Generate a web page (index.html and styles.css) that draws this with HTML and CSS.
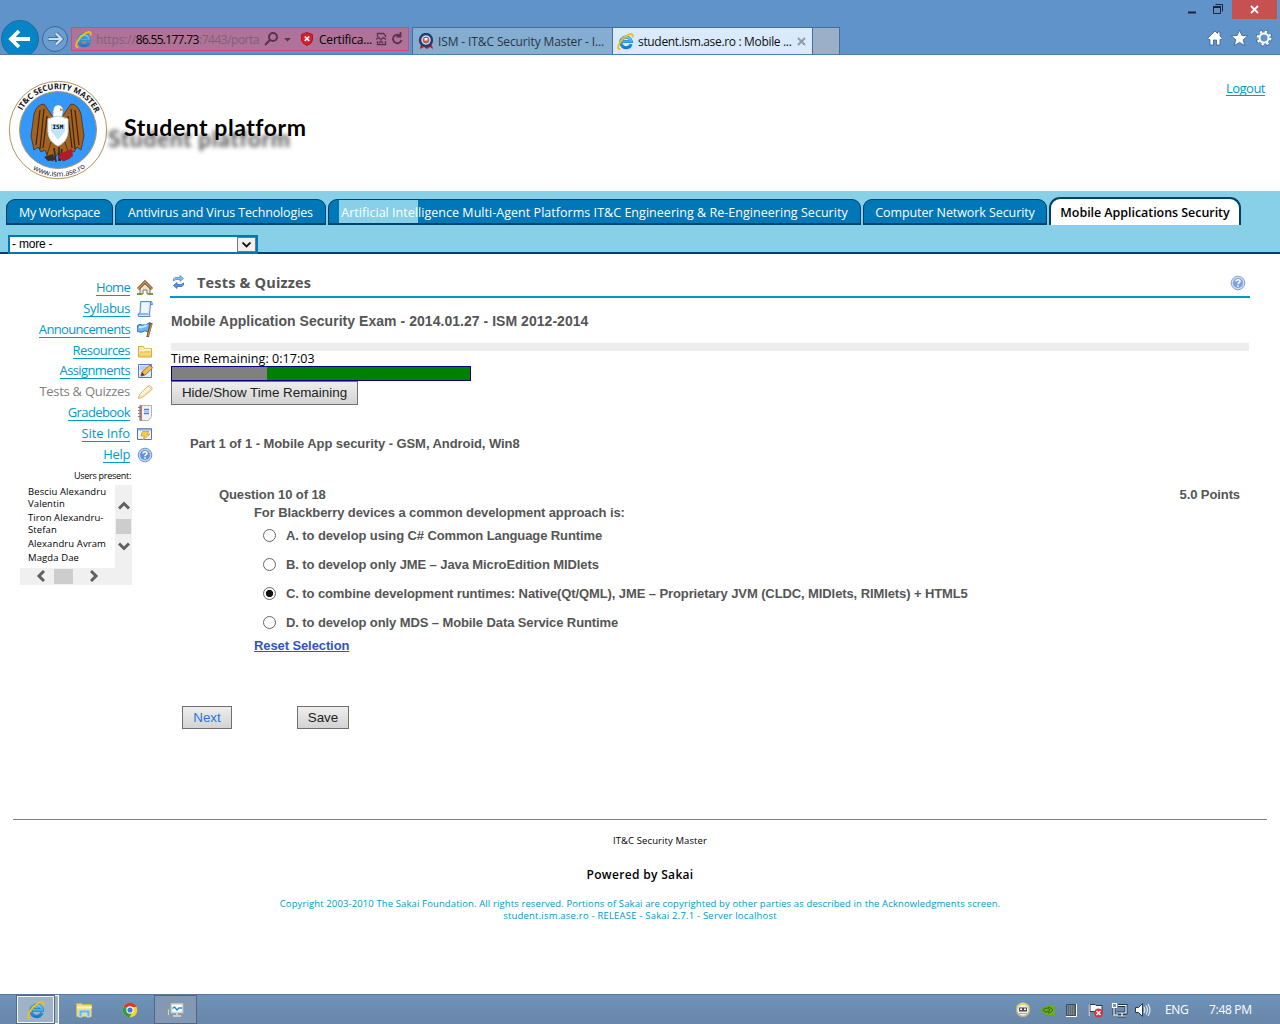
FILE: index.html
```html
<!DOCTYPE html>
<html lang="en">
<head>
<meta charset="utf-8">
<title>student.ism.ase.ro : Mobile Applications Security</title>
<link rel="stylesheet" href="styles.css">
</head>
<body>
<svg class="defs" width="0" height="0">
  <defs>
    <linearGradient id="blueE" x1="0" y1="0" x2="0" y2="1"><stop offset="0" stop-color="#6bd0f6"/><stop offset="1" stop-color="#1679c8"/></linearGradient>
    <linearGradient id="gold" x1="0" y1="0" x2="0" y2="1"><stop offset="0" stop-color="#fff3b0"/><stop offset="1" stop-color="#f2cc55"/></linearGradient>
    <symbol id="ie" viewBox="0 0 16 16">
      <path d="M13.300 10.500A5 5 0 1 1 13.500 8H5" fill="none" stroke="#1b7fc6" stroke-width="3"/>
      <path d="M13.300 10.500A5 5 0 1 1 13.500 8H5" fill="none" stroke="url(#blueE)" stroke-width="2"/>
      <path d="M3.200 15C.4 15.600.2 12.500 3.200 8.300 6.700 3.500 12.700-.5 14.500 1.500c.6.7.4 1.700 0 2.700" fill="none" stroke="#f1bd17" stroke-width="1.700"/>
    </symbol>
    <symbol id="help" viewBox="0 0 16 16">
      <circle cx="8" cy="8" r="6.800" fill="#c3d6f3" stroke="#6f94cb"/><circle cx="8" cy="8" r="5" fill="#6890d6"/>
      <path d="M6 6.500C6 4 10.200 4.200 10 6.400 9.900 7.600 8 7.700 8 9.200M8 10.300v1.500" fill="none" stroke="#fff" stroke-width="1.500"/>
    </symbol>
  </defs>
</svg>
<div class="screen">
  <header class="browser">
    <div class="nav-buttons">
      <svg width="70" height="36" viewBox="0 0 70 36">
        <circle cx="20" cy="20" r="18.500" fill="#0584c7" stroke="#2e6594"/>
        <path d="M30 20H11M19 12l-8 8 8 8" fill="none" stroke="#fff" stroke-width="3.800"/>
        <circle cx="55" cy="20" r="12.500" fill="#6c9dd0" stroke="#3c6896"/>
        <path d="M48 20h13M56 14.500l5.500 5.500-5.500 5.500" fill="none" stroke="#44719f" stroke-width="4"/>
        <path d="M48.500 20H61M56 14.500l5.500 5.500-5.500 5.500" fill="none" stroke="#cfe0f2" stroke-width="2.200"/>
      </svg>
    </div>
    <div class="address">
      <svg class="fav" width="17" height="17"><use href="#ie"/></svg>
      <span class="url">https://<b>86.55.177.73</b><em>:7443/porta</em></span>
      <svg width="34" height="16" viewBox="0 0 34 16" fill="none" stroke="#57344f" stroke-width="2"><circle cx="9" cy="6" r="4"/><path d="M6 9l-5 5"/><path d="M20 7h7l-3.500 3.500z" fill="#57344f" stroke="none"/></svg>
      <svg class="shield" width="12" height="14" viewBox="0 0 12 14"><path d="M6 .5 11.500 2.500V8Q11 11.500 6 13.500 1 11.500.5 8V2.500z" fill="#d81f2b" stroke="#b3122a"/><path d="M3.800 4.500l4.400 4.400M8.200 4.500L3.800 8.900" stroke="#fff" stroke-width="1.700"/></svg>
      <span class="cert">Certifica...</span>
      <svg class="bar-icons" width="28" height="16" viewBox="0 0 28 16" fill="none" stroke="#57344f" stroke-width="1.300"><path d="M1.500 6V2.500h6l2 2V6M1.500 10v3.500h8V10M0 8.500l2.500-2L5 8.500l2.500-2L10 8.500M3 12l2-2 2 2"/><path d="M23.500 4.200A4.300 4.300 0 1 0 25.500 9M20.500 5.500h4V1" stroke-width="1.800"/></svg>
    </div>
    <div class="tabs">
      <div class="tab">
        <svg width="16" height="17" viewBox="0 0 16 17"><path d="M3 10l-1 6 4-2 3 2 3-2 3 2-2-7z" fill="#b51e25"/><circle cx="8" cy="7" r="6" fill="#9bb4d0" stroke="#263b6b" stroke-width="2.400"/><circle cx="8" cy="7" r="4" fill="#3d78b8" stroke="#dce3ea"/><path d="M5 5h6v3L8 10.500 5 8z" fill="#d8513a"/><path d="M6.500 5h3v2.500h-3z" fill="#fff"/></svg>
        <span class="tab-ism">ISM - IT&amp;C Security Master - I...</span>
      </div>
      <div class="tab current">
        <svg width="17" height="17"><use href="#ie"/></svg>
        <span class="tab-student">student.ism.ase.ro : Mobile ...</span>
        <svg class="x" width="9" height="9" viewBox="0 0 9 9"><path d="M1 1l7 7M8 1L1 8" stroke="#929ca8" stroke-width="2"/></svg>
      </div>
      <div class="new-tab"></div>
    </div>
    <div class="window-tools">
      <div class="window-buttons">
        <svg width="44" height="19" viewBox="0 0 44 19"><path d="M0 12.500h8" stroke="#1c2530" stroke-width="2"/><path d="M25.500 6.500h7v7h-7zM27.500 4.500h7v7" fill="none" stroke="#1c2530"/><path d="M25 7h8" stroke="#1c2530" stroke-width="2"/></svg>
        <div class="close"><svg width="9" height="9" viewBox="0 0 9 9"><path d="M1 1l7 7M8 1L1 8" stroke="#fff" stroke-width="1.800"/></svg></div>
      </div>
      <svg class="quick" width="66" height="18" viewBox="0 0 66 18" fill="#fff" stroke="#3b5e83" stroke-width=".8">
        <path d="M.5 9.500L8 2l2.500 2.500V3H13v4l2.500 2.500L14 10.500h-1V16H9.500v-5h-3v5H3v-5.500H2z"/>
        <path d="M32.500 1l2.300 5.500 6 .4-4.600 3.800 1.500 5.900-5.200-3.200-5.200 3.200 1.500-5.900-4.600-3.800 6-.4z"/>
        <circle cx="57" cy="9" r="6.300" fill="none" stroke="#3b5e83" stroke-width="4" stroke-dasharray="2.700 2.250"/>
        <circle cx="57" cy="9" r="4.500" fill="none" stroke="#fff" stroke-width="2"/>
        <circle cx="57" cy="9" r="6.300" fill="none" stroke="#fff" stroke-width="2.500" stroke-dasharray="2.300 2.650"/>
      </svg>
    </div>
  </header>

  <section class="masthead">
    <svg class="logo" width="110" height="110" viewBox="0 0 110 110">
      <defs>
        <path id="arcTop" d="M22 35.500A41 41 0 0 1 96 40"/>
        <path id="arcBottom" d="M14 69A46 46 0 0 0 102 69"/>
      </defs>
      <circle cx="58" cy="55" r="48.700" fill="#fff" stroke="#b3925f"/>
      <circle cx="58" cy="55" r="38.500" fill="#3398fa" stroke="#b3925f"/>
      <g stroke="#3d2312" stroke-width=".7" fill="#a3621f">
        <path d="M44 29q-7 0-10 10l-3 22 3 14 4-3 3 5 4-2 2 5 6-15V42z"/>
        <path d="M71 29q7 0 10 10l3 22-3 14-4-3-3 5-4-2-2 5-6-15V42z"/>
        <path d="M40 35l-4 35M44 34l-4 40M47 41l-4 32M75 35l4 35M71 34l4 40M68 41l4 32" fill="none" stroke-width="1.200"/>
        <path d="M51 67l-5 16 7 3 5-8 5 8 7-3-5-16z"/>
      </g>
      <path d="M53 42q-1-13 6-12 6 1 3 12z" fill="#fff" stroke="#8396a8" stroke-width=".6"/><path d="M60 33l4 2-4 1z" fill="#ce9538"/>
      <path d="M48 44l10-3 10 3v13q-1 10-10 14-9-4-10-14z" fill="#fff" stroke="#c6def1"/>
      <path d="M51 49h14v7l-7 9-7-9z" fill="#bfe4fc"/>
      <text x="52.500" y="54" class="crest">ISM</text>
      <path d="M54 73l2 14m3-15v14m3-12l-2 12" stroke="#29272c" stroke-width="1.500"/><path d="M61 78l11-4 1 7-9 5-6-3z" fill="#b21c27"/><path d="M44 82l9-3 2 6-7 1z" fill="#38302b"/>
      <text class="ring-name"><textPath href="#arcTop" startOffset="0" textLength="90" lengthAdjust="spacingAndGlyphs">IT&amp;C SECURITY MASTER</textPath></text>
      <text class="ring-url"><textPath href="#arcBottom" startOffset="32" textLength="56" lengthAdjust="spacingAndGlyphs">www.ism.ase.ro</textPath></text>
    </svg>
    <h1>Student platform</h1>
    <a class="logout">Logout</a>
  </section>

  <nav class="sites">
    <ul>
      <li class="s1"><span>My Workspace</span></li>
      <li class="s2"><span>Antivirus and Virus Technologies</span></li>
      <li class="s3"><span>Artificial Intelligence Multi-Agent Platforms IT&amp;C Engineering &amp; Re-Engineering Security</span></li>
      <li class="s4"><span>Computer Network Security</span></li>
      <li class="s5 selected"><span>Mobile Applications Security</span></li>
    </ul>
    <div class="more"><span>- more -</span><i><svg width="9" height="6" viewBox="0 0 9 6"><path d="M.5.5l4 4 4-4" fill="none" stroke="#111" stroke-width="1.800"/></svg></i></div>
  </nav>

  <div class="columns">
    <aside>
      <ul class="tools">
        <li><a class="t1">Home</a><svg width="16" height="16" viewBox="0 0 16 16"><path d="M3 8v6h3v-4h4v4h3V8L8 3.500z" fill="#eee4d2" stroke="#827467"/><path d="M1 9l7-7 7 7" fill="none" stroke="#704a2b" stroke-width="3"/><path d="M1 9l7-7 7 7" fill="none" stroke="#cf9a58" stroke-width="1.300"/><path d="M0 13h5v2H0zM11 13h5v2h-5z" fill="#6c9f43"/></svg></li>
        <li><a class="t2">Syllabus</a><svg width="16" height="16" viewBox="0 0 16 16"><path d="M3.500.5h11l1 3h-2l-1 9 .5 3H1.500l-.5-2.500 2-1z" fill="#d3e4f9" stroke="#5a88c8"/><path d="M5 2h7l-1 10H4z" fill="#edf5ff"/><path d="M1.500 13h10M13.500 3.500V.5" stroke="#5a88c8"/></svg></li>
        <li><a class="t3">Announcements</a><svg width="16" height="16" viewBox="0 0 16 16"><path d="M.5 3.500Q3 1.500 5 3q3 1 8-2.500L11 10Q8 7.500 5 10 2 10.500 0 9z" fill="#67b8f3" stroke="#2b69ac"/><path d="M2 5q4 1 8-2" stroke="#c4e8ff" stroke-width="2" fill="none"/><path d="M14.500 1l-4 14" stroke="#6c4927" stroke-width="2.500"/><path d="M14.500 2L11 14" stroke="#cf9145" stroke-width="1.200"/></svg></li>
        <li><a class="t4">Resources</a><svg width="16" height="16" viewBox="0 0 16 16"><path d="M1.500 14V3.500h5l1 2h7V14z" fill="url(#gold)" stroke="#d3ac4a"/><path d="M3 8h4l1-1.500h6" fill="none" stroke="#fffbe0" stroke-width="1.500"/><path d="M3 9h10" stroke="#deb955"/></svg></li>
        <li><a class="t5">Assignments</a><svg width="16" height="16" viewBox="0 0 16 16"><path d="M1.500 1.500h13v13h-13z" fill="#dceafa" stroke="#4f80bf"/><path d="M3 4h7M3 6h5" stroke="#8cb2e0"/><path d="M4 13l1-4 8-7 2.500 3L8 12z" fill="#f5bc51" stroke="#ae702b"/><path d="M4 13l1-4 2.500 3z" fill="#3b3b3b"/></svg></li>
        <li><a class="t6 off">Tests &amp; Quizzes</a><svg width="16" height="16" viewBox="0 0 16 16"><path d="M1.500 14.500l1-4L11 2q2-1 3.500 1t0 3L6 13z" fill="#fae6b8" stroke="#dfb679"/><path d="M4 11l9-8" stroke="#fff8df" stroke-width="2"/><path d="M11 2l4 4" stroke="#e3c6a0"/></svg></li>
        <li><a class="t7">Gradebook</a><svg width="16" height="16" viewBox="0 0 16 16"><path d="M2.500.5h12v11l-3 4h-9z" fill="#f1f2f4" stroke="#b0b3b8"/><path d="M4 .5v15" stroke="#a4523e" stroke-width="1.500"/><path d="M1 2.500h3M1 5.500h3M1 8.500h3M1 11.500h3" stroke="#7b7d82"/><path d="M7 4.500h5M7 8.500h5" stroke="#5482c4" stroke-width="1.500"/><path d="M7 6.500h5" stroke="#a9c2e6" stroke-width="2"/></svg></li>
        <li><a class="t8">Site Info</a><svg width="16" height="16" viewBox="0 0 16 16"><path d="M.5 2.500h14v11H.5z" fill="#edf4fe" stroke="#5377b4"/><path d="M1 3.500h13" stroke="#8baee5" stroke-width="2"/><path d="M5.500 5.500H12L10 8h3l-7 6 1.500-4H4z" fill="#f6ce49" stroke="#e3a63b"/></svg></li>
        <li><a class="t9">Help</a><svg width="16" height="16"><use href="#help"/></svg></li>
      </ul>
      <p class="present">Users present:</p>
      <div class="users">
        <ul>
          <li>Besciu Alexandru<br>Valentin</li><li>Tiron Alexandru-<br>Stefan</li><li>Alexandru Avram</li><li>Magda Dae</li>
        </ul>
        <div class="vbar"><svg width="12" height="9" viewBox="0 0 12 9"><path d="M1 7.500l5-5 5 5" fill="none" stroke="#606060" stroke-width="3"/></svg><i></i><svg width="12" height="9" viewBox="0 0 12 9"><path d="M1 1.500l5 5 5-5" fill="none" stroke="#606060" stroke-width="3"/></svg></div>
        <div class="hbar"><svg width="9" height="12" viewBox="0 0 9 12"><path d="M8 1L3 6l5 5" fill="none" stroke="#606060" stroke-width="3"/></svg><i></i><svg width="9" height="12" viewBox="0 0 9 12"><path d="M1 1l5 5-5 5" fill="none" stroke="#606060" stroke-width="3"/></svg></div>
      </div>
    </aside>
    <main>
      <div class="portlet-title">
        <svg width="13" height="14" viewBox="0 0 13 14"><path d="M1.500 6V4L3 2.500h5V.5l3.500 3L8 6.500v-2H4z" fill="#8dbef0" stroke="#4b8bd2" stroke-width=".8"/><path d="M11.500 8v2L10 11.500H5v2l-3.500-3L5 7.500v2h4z" fill="#5a97e0" stroke="#2d6bbb" stroke-width=".8"/></svg>
        <h2>Tests &amp; Quizzes</h2>
        <svg class="ask" width="16" height="16"><use href="#help"/></svg>
      </div>
      <h3>Mobile Application Security Exam - 2014.01.27 - ISM 2012-2014</h3>
      <div class="rule"></div>
      <div class="timer"><span>Time Remaining: 0:17:03</span></div>
      <div class="progress"><i></i></div>
      <button class="toggle">Hide/Show Time Remaining</button>
      <h4>Part 1 of 1 - Mobile App security - GSM, Android, Win8</h4>
      <div class="q-head"><span>Question 10 of 18</span><span>5.0 Points</span></div>
      <div class="question">
        <p>For Blackberry devices a common development approach is:</p>
        <label><i></i><span>A. to develop using C# Common Language Runtime</span></label>
        <label><i></i><span>B. to develop only JME – Java MicroEdition MIDlets</span></label>
        <label><i class="on"></i><span>C. to combine development runtimes: Native(Qt/QML), JME – Proprietary JVM (CLDC, MIDlets, RIMlets) + HTML5</span></label>
        <label><i></i><span>D. to develop only MDS – Mobile Data Service Runtime</span></label>
        <a>Reset Selection</a>
      </div>
      <div class="actions"><button class="next">Next</button><button class="save">Save</button></div>
    </main>
  </div>

  <footer class="page-foot">
    <p class="f1">IT&amp;C Security Master</p>
    <p class="f2">Powered by Sakai</p>
    <p class="f3"><span>Copyright 2003-2010 The Sakai Foundation. All rights reserved. Portions of Sakai are copyrighted by other parties as described in the Acknowledgments screen.</span></p>
    <p class="f4"><span>student.ism.ase.ro - RELEASE - Sakai 2.7.1 - Server localhost</span></p>
  </footer>

  <div class="taskbar">
    <div class="task ie-task"><svg width="18" height="18"><use href="#ie"/></svg></div><div class="stack"></div>
    <svg class="folder" width="17" height="16" viewBox="0 0 17 16"><path d="M.5 14.500V1.500h5l1 1h9v12z" fill="#eed77c" stroke="#cdb45a"/><path d="M1 5.500h15" stroke="#fff6bb" stroke-width="2"/><path d="M3 15V8h11v7h-3v-4H6v4z" fill="#65b9e3" stroke="#bbe4f5"/></svg>
    <svg class="chrome" width="16" height="16" viewBox="0 0 16 16"><circle cx="8" cy="8" r="7.300" fill="#fcd226"/><path d="M8 8L1.700 4.400A7.300 7.300 0 0 1 14.700 5H8z" fill="#dc382d"/><path d="M8 8L1.700 4.400A7.300 7.300 0 0 0 7.500 15.300L11 9z" fill="#2c9d49"/><circle cx="8" cy="8" r="3.700" fill="#fff"/><circle cx="8" cy="8" r="2.600" fill="#3e78d6"/></svg>
    <div class="task monitor"><svg width="17" height="16" viewBox="0 0 17 16"><path d="M4.500 2h11v8.500h-11z" fill="#fff" stroke="#d0d2d2" stroke-width="1.500"/><path d="M5.500 6.500l2-1.500 2.500 3 2-2h3" stroke="#278bc6" fill="none" stroke-width="1.400"/><path d="M6 14h8M10 11v3" stroke="#cacac7" stroke-width="2"/><path d="M.5 6.500h2v7h-2z" fill="#d0d2d0" stroke="#999"/><path d="M1 7h1" stroke="#5bbc2b"/></svg></div>
    <div class="tray">
      <svg width="138" height="20" viewBox="0 0 138 20">
        <circle cx="8" cy="10" r="6.500" fill="#eee" stroke="#bcae87" stroke-width="1.500"/><path d="M2 7q6-7 12 0" stroke="#d5d76b" stroke-width="2" fill="none"/><path d="M4 7.500h8v4H4z" fill="#4a4b4d"/><path d="M5 8.500h2v1.500H5zm4 0h2v1.500H9z" fill="#fff"/><path d="M4 13.500h8" stroke="#aaa"/>
        <path d="M31 5h9v10H31z" fill="#70ae14"/><path d="M25 10q5-7 12 0-6 7-12 0z" fill="#69a919"/><path d="M28 10q4-4 7 0-4 4-7 0zM33 7q4 1 5 3-2 3-5 3" fill="none" stroke="#31571b" stroke-width=".8"/>
        <path d="M51.500 4.500h9v11h-9z" fill="#7b8490" stroke="#424d5b"/><path d="M61.500 4v12.500H51" fill="none" stroke="#fff"/><path d="M53 6h7M53 8h7M53 10h7M53 12h7M53 14h7" stroke="#45525f" stroke-dasharray="1 1"/>
        <path d="M73.500 3v14M75 4.500h5l1 1h6v6H75z" fill="#fff" stroke="#26374b"/><path d="M74 3.500v13" stroke="#fff"/><circle cx="83.500" cy="13" r="4.500" fill="#dd3334"/><path d="M81.500 11l4 4M85.500 11l-4 4" stroke="#fff" stroke-width="1.500"/>
        <path d="M103 5.500h8v7.500h-9M107 13v3M103 16h8M99 8v7" fill="none" stroke="#26374b" stroke-width="3"/><path d="M103 5.500h8v7.500h-9M107 13v3M103 16h8M99 8v7h4M97.500 3.500h4v4h-4z" fill="none" stroke="#fff" stroke-width="1.200"/>
        <path d="M120.500 7.500h3l4-4v13l-4-4h-3z" fill="#fff" stroke="#26374b"/><path d="M129 7q2 3 0 6M131 5.500q3 4.500 0 9M133 4q4 6 0 12" fill="none" stroke="#e9eff6" stroke-width="1.100"/>
      </svg>
      <span class="lang">ENG</span><span class="clock">7:48 PM</span>
    </div>
  </div>
</div>
</body>
</html>
```
FILE: styles.css
```css
* { box-sizing: border-box; }
body, ul, p, h1, h2, h3, h4 { margin: 0; padding: 0; }
ul { list-style: none; }
svg { display: block; flex: none; }
span, a, h1, h2, h3, h4, p, label { white-space: nowrap; }
.defs { position: absolute; }
body { background: #fff; color: #000; font-family: "Open Sans", "Noto Sans", sans-serif; }
.screen { width: 1280px; height: 1024px; display: flex; flex-direction: column; overflow: hidden; }

/* Browser chrome */
.browser { height: 55px; flex: none; display: flex; background: #5f93ca; border-bottom: 1px solid #4a7db5; font-size: 12px; }
.nav-buttons { width: 71px; padding-top: 19px; height: 54px; overflow: hidden; }
.address { width: 338px; height: 24px; margin-top: 27px; display: flex; align-items: center; background: #b07299; border: 1px solid #cf4d77; padding-left: 3px; }
.address .fav { margin-right: 4px; }
.url { width: 168px; color: #7b6377; letter-spacing: -.15px; }
.url b { font-weight: 400; color: #000; letter-spacing: -.7px; }
.url em { font-style: normal; margin-left: .5px; letter-spacing: -.5px; }
.shield { margin-left: 3px; }
.cert { width: 53px; margin: 0 4px 0 6px; letter-spacing: -.2px; }
.tabs { display: flex; margin: 27px 0 0 3px; height: 27px; }
.tab { width: 201px; margin-right: -1px; display: flex; align-items: center; gap: 4px; padding-left: 5px; background: #85add2; border: 1px solid #426f9c; border-bottom: 0; color: #293541; }
.tab.current { background: #d9eafa; color: #111; padding-left: 4px; }
.tab .x { margin-left: 3px; }
.tab span { width: 168px; letter-spacing: -.12px; }
.tab.current span { width: 152px; letter-spacing: -.33px; }
.new-tab { width: 28px; background: #9bafc8; border: 1px solid #426f9c; border-bottom: 0; }
.window-tools { width: 92px; margin-left: auto; display: flex; flex-direction: column; align-items: flex-end; }
.window-buttons { display: flex; height: 19px; }
.close { width: 45px; margin-right: 3px; background: #c75050; display: flex; align-items: center; justify-content: center; }
.quick { margin: 10px 7px 0 0; }

/* Masthead */
.masthead { height: 136px; flex: none; display: flex; padding: 20px 15px 0 0; }
h1 { margin: 37px 0 0 14px; height: 32px; font: 700 23px/30px Lato, "Open Sans", sans-serif; letter-spacing: .55px; text-shadow: -16px 11px 4px #555; }
.logout, .tools a { font-size: 13px; line-height: 17px; color: #0099cc; border-bottom: 1px solid #0099cc; letter-spacing: -.35px; }
.logout { height: 16px; margin: 5px 0 0 auto; letter-spacing: -.5px; }
.crest { font: 700 6px "DejaVu Sans Mono", monospace; }
.ring-name { font: 700 8px "Open Sans", sans-serif; fill: #111; }
.ring-url { font: 7.5px "Open Sans", sans-serif; fill: #112; }

/* Site navigation */
.sites { height: 63px; flex: none; background: #87d0e7; border-bottom: 2px solid #00406b; }
.sites ul { height: 34px; display: flex; align-items: flex-end; gap: 2px; padding-left: 6px; }
.sites li { height: 26px; padding-top: 1px; display: flex; justify-content: center; align-items: center; border: 1px solid #00406b; border-bottom-width: 2px; border-radius: 9px 9px 0 0; background: #0077b6; color: #fff; font-size: 12.5px; }
.s1 { width: 107px; letter-spacing: -.35px; }
.s2 { width: 211px; letter-spacing: -.13px; }
.s3 { width: 533px; letter-spacing: .035px; }
.s4 { width: 184px; letter-spacing: -.08px; }
.sites li.s3 { background: linear-gradient(90deg, #0077b6 10px, #87d0e7 10px, #87d0e7 89px, #0077b6 89px); }
.sites li.s5 { width: 192px; height: 28px; padding-top: 0; border: 2px solid #00406b; border-bottom: 0; border-radius: 11px 11px 0 0; background: #fff; color: #000; font-weight: 600; letter-spacing: -.05px; }
.more { width: 250px; height: 19px; margin: 10px 0 0 8px; padding-left: 2px; display: flex; border: 2px solid #0077b6; background: #fff; font: 12px/15px "Liberation Sans", sans-serif; letter-spacing: -.2px; justify-content: space-between; }
.more i { width: 19px; height: 15px; display: flex; align-items: center; justify-content: center; background: #f0f0f0; border: 1px solid #777; }

/* Sidebar */
.columns { height: 565px; flex: none; display: flex; }
aside { width: 170px; padding-top: 23.6px; }
.tools li { height: 20.87px; display: flex; justify-content: flex-end; align-items: center; gap: 7px; padding-right: 17px; }
.tools a { height: 16px; line-height: 15px; }
.tools a.off { color: #808080; border-color: transparent; }
.tools .t1 { letter-spacing: -.7px; }
.tools .t3 { letter-spacing: -.65px; }
.tools .t4 { letter-spacing: -.55px; }
.tools .t5 { letter-spacing: -.6px; }
.tools .t6 { letter-spacing: -.28px; }
.tools .t7 { letter-spacing: -.6px; }
.tools .t8 { letter-spacing: -.12px; }
.present { font-size: 9px; line-height: 12px; text-align: right; margin: 4.4px 39px 3px 0; letter-spacing: -.28px; }
.users { width: 112px; height: 100px; margin-left: 20px; display: grid; grid-template: 83px 17px / 95px 17px; }
.users ul { padding: 1px 0 0 8px; font-size: 9.5px; line-height: 12px; letter-spacing: .1px; }
.users li { margin-bottom: 2px; }
.vbar, .hbar { background: #f0f0f0; display: flex; align-items: center; }
.vbar { flex-direction: column; padding-top: 16px; grid-row: span 2; }
.vbar i { width: 15px; height: 15px; margin: 9px 0 8px; background: #cdcdcd; }
.hbar { padding-left: 16px; }
.hbar i { width: 19px; height: 15px; margin: 0 17px 0 9px; background: #cdcdcd; }

/* Quiz */
main { width: 1080px; color: #555; font: 700 13px "Liberation Sans", sans-serif; display: flex; flex-direction: column; align-items: flex-start; }
.portlet-title { width: 100%; height: 44px; padding: 14px 4px 0 2px; display: flex; align-items: center; border-bottom: 2px solid #0099cc; }
.portlet-title h2 { margin-left: 12px; font: 700 14.5px "Open Sans", sans-serif; letter-spacing: .18px; }
.ask { margin: 1px 0 0 auto; opacity: .85; }
h3 { margin: 15px 0 0 1px; font-size: 14px; line-height: 16px; letter-spacing: .04px; }
.rule { width: 1078px; height: 8px; margin: 14px 0 0 1px; background: #ededed; }
.timer { margin-left: 1px; height: 15px; font: 12.5px/15px "Open Sans", sans-serif; letter-spacing: .06px; color: #000; }
.progress { width: 300px; height: 15px; margin-left: 1px; background: #008000; border: 1px solid #000080; }
.progress i { display: block; height: 100%; width: 95px; background: #808080; }
button { padding: 0; font: 13px "Liberation Sans", sans-serif; color: #222; border: 1px solid #707070; border-radius: 0; background: linear-gradient(#eee, #d3d3d3); }
.toggle { width: 187px; height: 24px; margin-left: 1px; padding-bottom: 1px; font-size: 13.4px; }
h4 { margin: 31px 0 0 20px; font-size: 13px; line-height: 16px; letter-spacing: -.07px; }
.q-head { width: 1021px; margin: 35px 0 0 49px; display: flex; justify-content: space-between; line-height: 16px; letter-spacing: -.1px; }
.question { margin: 2px 0 0 84px; letter-spacing: -.1px; }
.question p { line-height: 15px; margin-bottom: 1px; }
.question label { height: 29px; display: flex; align-items: center; padding-left: 9px; gap: 10px; }
.question i { width: 13px; height: 13px; border: 1px solid #666; border-radius: 50%; background: #fff; flex: none; }
.question i.on { background: radial-gradient(circle, #111 3.3px, #fff 4px); }
.question a { display: block; line-height: 16px; margin-top: 1px; color: #3355bb; text-decoration: underline; }
.actions { display: flex; margin: 52px 0 0 12px; }
.next { width: 50px; height: 23px; font-size: 13.4px; color: #2277dd; }
.save { width: 52px; height: 23px; margin-left: 65px; font-size: 13.4px; }

/* Footer */
.page-foot { height: 175px; flex: none; margin: 0 13px; border-top: 1px solid #808080; text-align: center; font-size: 9.5px; line-height: 12px; color: #0099cc; }
.f1 { margin: 15px 0 0 40px; color: #000; letter-spacing: .1px; }
.f2 { margin: 20px 0 0; color: #000; font-size: 12px; line-height: 15px; font-weight: 600; letter-spacing: .33px; }
.f3 { margin-top: 16px; letter-spacing: .118px; }
.f4 { letter-spacing: .2px; }

/* Taskbar */
.taskbar { height: 30px; flex: none; display: flex; align-items: center; padding-left: 16px; background: linear-gradient(#6e93ba, #6886a8); border-top: 1px solid #55789c; color: #fff; font-size: 12px; }
.task { width: 39px; height: 29px; display: flex; align-items: center; justify-content: center; background: #9fb2c8; border: 1px solid #e9eff5; outline: 1px solid #4f6984; outline-offset: -1px; }
.ie-task { border: 2px solid #f1f5f9; }
.stack { width: 4px; height: 29px; border: 1px solid #fff; border-left: 0; background: #9fb2c8; }
.folder { margin-left: 17px; }
.chrome { margin: 0 16px 0 29px; }
.monitor { width: 43px; background: #8399b3; border-color: #a6b6c8; }
.tray { margin-left: auto; display: flex; align-items: center; }
.lang { margin-left: 12px; width: 44px; letter-spacing: -.3px; }
.clock { width: 71px; letter-spacing: -.3px; }
```
